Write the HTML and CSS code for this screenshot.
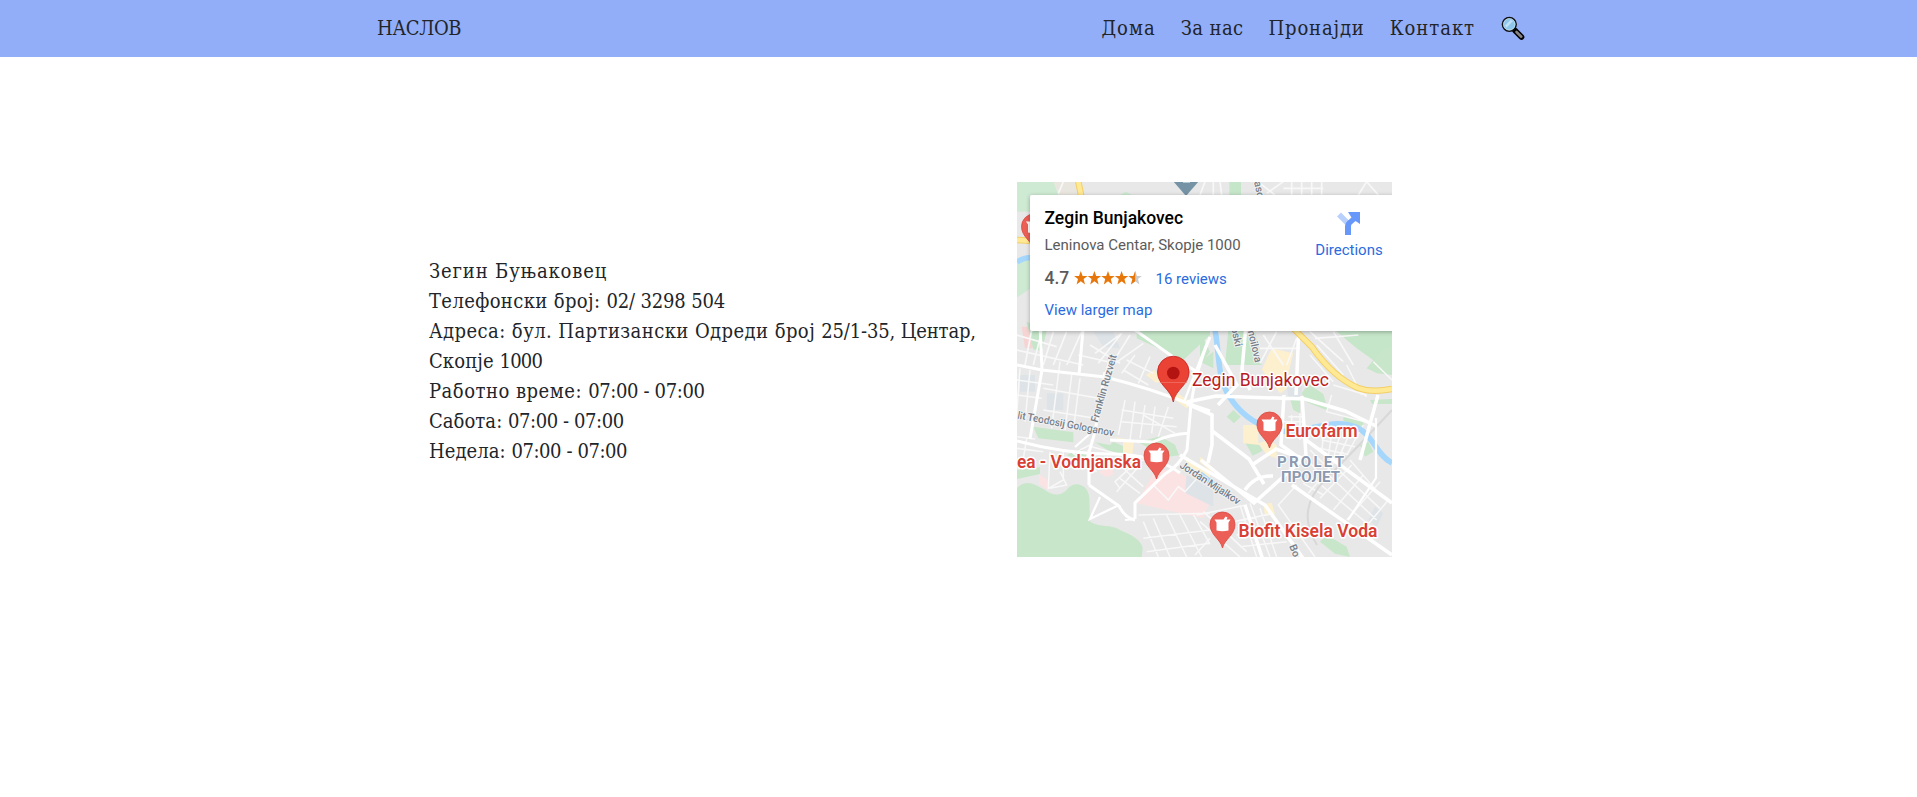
FILE: index.html
```html
<!DOCTYPE html>
<html lang="mk">
<head><meta charset="utf-8"><title>Наслов</title><link rel="stylesheet" href="styles.css"></head>
<body>
<header class="navbar">
  <div class="brand">НАСЛОВ</div>
  <nav class="links"><a class="home">Дома</a><a class="about">За нас</a><a class="find">Пронајди</a><a class="contact">Контакт</a>
    <svg class="search" viewBox="0 0 24 24"><path d="M14 14.500 20.500 21" stroke="#000" stroke-width="5.600" stroke-linecap="round"/><path d="M15.500 16 20.300 20.700" stroke="#858585" stroke-width="2.600" stroke-linecap="round"/><circle cx="8.300" cy="8.300" r="6.900" fill="#8ec7ee" stroke="#111" stroke-width="1.500"/><circle cx="8.300" cy="8.300" r="5.700" fill="none" stroke="#c4dceb" stroke-width=".8"/><path d="M4 9.500 9.500 4 12 5 5.500 11.800Z" fill="#c0e0f5"/></svg>
  </nav>
</header>
<main class="content">
  <section class="details">
    <p class="name">Зегин Буњаковец</p>
    <p class="phone">Телефонски број: <span>02/ 3298 504</span></p>
    <p class="street">Адреса: бул. Партизански Одреди број <span>25/1-35, Центар,</span></p>
    <p class="city">Скопје <span>1000</span></p>
    <p class="hours">Работно време: <span>07:00 - 07:00</span></p>
    <p class="weekend">Сабота: <span>07:00 - 07:00</span></p>
    <p class="weekend">Недела: <span>07:00 - 07:00</span></p>
  </section>
  <section class="map">
    <svg class="tiles" viewBox="1017 182 375 375">
      <defs>
        <g id="pin"><path d="M0 36C-2 27-12.500 23-12.500 12.500a12.500 12.500 0 0 1 25 0C12.500 23 2 27 0 36Z" fill="#eb5f57" stroke="#d9483f" stroke-width=".8"/><path d="M-8 7.500h9l2-3 2 1-1 2h4l-2 3v8q-6 1.500-12 0v-8Z" fill="#fff"/></g>
      </defs>
      <rect x="1017" y="182" width="375" height="375" fill="#e8e8e8"/>
      <!-- parks -->
      <g transform="translate(1010 175) scale(.33333)">
        <path d="M20 20H130L145 60H60V110H20ZM330 60l18-10 18 10ZM20 260l45-12v90l-45 30Z" fill="#ceead2"/>
        <path d="M130 20h62l12 40h-55Z" fill="#e9e6df"/><path d="M35 455H68v65H45Z" fill="#f7d4d4"/>
        <path d="M380 450H600V480L520 555 380 490ZM50 440l60 28-15 60-25-5Z" fill="#c5e6c9"/>
        <path d="M250 470h60l20 50-50-5Z" fill="#dde3e7"/>
      </g>
      <g transform="translate(1200 175) scale(.33333)">
        <path d="M88 20h35v40H88ZM85 465h80l20 105H75ZM405 465H576V570H540L470 520ZM0 470l30 60-30 40Z" fill="#c5e6c9"/>
        <path d="M215 520l65 15-20 80-75-30Z" fill="#fdf0ce"/>
      </g>
      <g transform="translate(1010 355) scale(.33333)">
        <path d="M20 400C50 370 75 390 100 402C125 422 150 425 170 405C190 375 235 385 238 430L240 500C275 520 300 505 330 525C365 540 395 555 398 580L395 606H20Z" fill="#c8e6c9"/>
        <path d="M70 215 190 232V262L85 250ZM170 300l40-18 28 22-20 15ZM255 262l45 8 10-10 35 15v18l-35 3ZM385 262l65-18 45 25 12 32-40 5ZM20 345l70-8v20l-70 15ZM570 20l40-30v50Z" fill="#c8e6c9"/>
        <path d="M310 245l62 12-5 40-28-5v-35ZM408 60l25-15 30 33-25 5ZM490 105l55 40-15 15-55-40ZM528 310l72 35v25l-72-32Z" fill="#fdf0ce"/>
        <path d="M430 355Q450 335 510 355L600 405V440L580 490 380 445ZM87 358l32 20-5 28-27-20ZM265 350l45-15v25l-25 5Z" fill="#fce3e3"/>
        <path d="M530 360l80 45v50l-85-42ZM30 60h45v50H30ZM110 115h50v50h-50Z" fill="#dde3e7"/>
      </g>
      <g transform="translate(1200 355) scale(.33333)">
        <path d="M305 115l20-28 45 30 15 50-65-25ZM80 185l20-20 22 20-20 20ZM500 40l50-60 26-5v85l-45-5ZM510 135l66-3v15h-60ZM480 270l25-10 15 30-25 15ZM135 262l35-5 18 30-30 15ZM360 560l20-20 60 35 10 31-45-10ZM430 182l60 20v15l-60-20ZM270 130l30 5v40l-20-10Z" fill="#c8e6c9"/>
        <path d="M130 210h45v55l30-10 25 15v40l-30-10-20-30-50-5ZM190 50 205 0 270 15 262 100 240 115ZM0 305l42 35-5 12-37-30ZM190 448l25-5 10 35-30 5Z" fill="#fdf0ce"/>
        <path d="M505 495l20-40 25 20-20 40ZM260 90h45v35h-40Z" fill="#dde3e7"/>
      </g>
      <!-- minor streets -->
      <g fill="none" stroke="#f8f8f8" stroke-width="1.500">
        <g transform="translate(1010 355) scale(.33333)" stroke-width="4.500">
          <path d="M20 75 130 90M20 120 95 130M30 40 20 180M60 45 45 200M150 20 125 220M185 60 165 225M210 70 190 225M20 245 75 252M100 100 265 130M100 165 255 190M20 280l80 10M50 250l-10 60M120 290l-5 110 45-25 0-90M120 400l50-10-20-40M240 270l-50 25 70 55M245 275l145 40 80 5M320 410l70-80M330 370l60 45M345 345l55 50M330 400l-15-20 60-55"/>
          <path d="M345 135 325 240M375 140 360 255M405 150 390 250M435 155 425 235M335 165l155 25M335 200l165 15M400 180l95 55M475 155l-30 90M340 45l75 45M350 15l80 40M375 0l-40 55M420 5l-35 80M385 480l215-5M400 500l45 106M430 490l50 116M470 480l60 126M510 480l65 126M550 478l50 90M400 550l200-25M410 590l190-25M430 390l45 45 30-40 20 15 45-50"/>
        </g>
        <g transform="translate(1200 355) scale(.33333)" stroke-width="4.500">
          <path d="M265 185h45M275 180v60M300 175v80M250 200h60M370 240l-5 55M395 235l-10 70M420 240l-20 70M445 245l-30 65M365 255l100 20M360 280l90 20M400 90l100 30M420 60l80 65M440 30l45 90M330 0l70 80M350-30l80 90M395 120l-15 50 115 30M520 20l56 55M490 210l-50 90M310 300l60 70M330 285l75 75"/>
          <path d="M310 385l60 35M370 345l160 150M345 375l180 150M410 340l130 120M450 315l95 110M325 415 430 290M360 430l95-100M400 465l90-105M440 495l100-115M490 525l75-90M0 500l120 106M10 470l130 120M120 450l50 156M150 445l60 161M180 460l50 146M100 500l120-25M110 540l125-20M120 575l140-15M-10 480l150-30M290 390l-55 60 110 156M30 550l-45 50M215 540h-70"/>
        </g>
        <g transform="translate(1010 175) scale(.33333)" stroke-width="5"><path d="M20 480l120 35M65 465l-20 105M95 468 70 570M130 470l-30 100M20 525l200 45M170 470l-40 100M215 470l-45 100M240 510l90 55M255 535l80-60M335 475l-70 90M205 540l110 25M360 480l-50 80M400 505l-85 60M145 55l15-35"/></g>
        <g transform="translate(1200 175) scale(.33333)" stroke-width="5"><path d="M0 60 15 20M40 60V20M65 60 60 20M200 55l50-35M180 25l45 35M275 20v40M305 20v40M335 20v40M250 40h120M365 20v40M475 60l25-40 35 40M190 480l60 90M230 470l-50 95M180 520h120M290 490l-30 80M330 470l100 90M400 470l60 100M345 490l130-10"/></g>
      </g>
      <!-- railway -->
      <path d="M1392 410Q1355 450 1325 480T1317 545" stroke="#d8d8d8" stroke-width="2" fill="none"/>
      <!-- river -->
      <path d="M1017 262q9-6 20-4M1214 325C1220 350 1216 375 1229 396C1240 414 1254 424 1274 430C1305 437 1326 416 1356 427C1373 434 1376 455 1392 463M1200 474l18 14" stroke="#a5d6fc" stroke-width="5.500" fill="none"/>
      <!-- main streets -->
      <g fill="none" stroke="#fff">
        <path d="M1017 365 1042 370 1105 377Q1150 388 1195 406L1210 411M1017 441Q1065 454 1110 454T1180 473M1110 440 1153 442Q1170 434 1190 433M1040 325l2 45-12 69M1105 372l-10 60-8 27M1089 450v35M1089 485l30 21Q1125 518 1135 520M1210 337Q1196 370 1191 404L1187 450Q1179 466 1165 474L1135 503 1135 519M1110 360l-5 18M1083 330l-4 45M1128 325l48 34 23 14" stroke-width="3"/>
        <path d="M1187 402 1216 396 1305 399 1345 411 1376 426M1187 404l25 11v30l-4 18M1215 345l22 40-19 20M1284 395l-3 50 21 15-48 43-53-43M1302 396l4 60M1306 440l86 63M1378 395l-18 65M1211 430l38 29 15 25M1180 455l85 50 50 70M1245 505l18 55M1299 325l-3 70M1252 465l24-16 26 9M1245 490q10-15 28-14M1292 485l100 70M1246 325l-4 45 8 20" stroke-width="3.500"/>
        <path d="M1092 432 1075 447M1184 402 1208 340M1376 418v60l-28 42M1119 505l-29 14 10-22M1135 519l-10 1" stroke-width="2.200"/>
      </g>
      <path d="M1077 175l5 25M1017 240q8 0 19 2M1290 325 1312 347Q1333 377 1358 388Q1372 393 1392 389" stroke="#f3cf66" stroke-width="6.500" fill="none"/>
      <path d="M1077 175l5 25M1017 240q8 0 19 2M1290 325 1312 347Q1333 377 1358 388Q1372 393 1392 389" stroke="#ffe994" stroke-width="4.500" fill="none"/>
      <g class="street-name">
        <text transform="translate(1097.500 423) rotate(-74)" textLength="70">Franklin Ruzvelt</text>
        <text transform="translate(1017 418.500) rotate(10.500)" textLength="98">lit Teodosij Gologanov</text>
        <text transform="translate(1179 467) rotate(33)" textLength="70">Jordan Mijalkov</text>
        <text transform="translate(1247 328) rotate(77)" textLength="36">moilova</text>
        <text transform="translate(1231 328) rotate(77)">oski</text>
        <text transform="translate(1254 182) rotate(78)">aso</text>
        <text transform="translate(1289 546) rotate(68)">Bo</text>
      </g>
      <path d="M1173 181h26l-13 15Z" fill="#7593a5"/><path d="M1183 182h7" stroke="#b8c8d1" stroke-width="2"/>
      <use href="#pin" x="1034" y="214"/>
      <use href="#pin" x="1156.500" y="443"/>
      <use href="#pin" x="1269.500" y="412"/>
      <use href="#pin" x="1222.500" y="512"/>
      <path d="M1173.300 402C1171 389 1157.500 385 1157.500 372a15.800 15.800 0 0 1 31.600 0C1189 385 1175.500 389 1173.300 402Z" fill="#ea4335" stroke="#c5221f" stroke-width=".8"/><circle cx="1173.300" cy="373" r="6.300" fill="#b31412"/><path d="M1160 382.500h27" stroke="#f0776c" stroke-width=".7"/>
      <g class="place">
        <text class="main-place" x="1192" y="385.500" textLength="137" lengthAdjust="spacingAndGlyphs">Zegin Bunjakovec</text>
        <text x="1285.500" y="437" textLength="72" lengthAdjust="spacingAndGlyphs">Eurofarm</text>
        <text x="1238.500" y="536.500" textLength="139" lengthAdjust="spacingAndGlyphs">Biofit Kisela Voda</text>
        <text x="1017" y="468" textLength="124" lengthAdjust="spacingAndGlyphs">ea - Vodnjanska</text>
      </g>
      <g class="district"><text x="1277" y="467" textLength="67">PROLET</text><text x="1281" y="482" textLength="59" lengthAdjust="spacingAndGlyphs">ПРОЛЕТ</text></g>
    </svg>
    <article class="card">
      <div class="place-info">
        <h2>Zegin Bunjakovec</h2>
        <div class="address">Leninova Centar, Skopje 1000</div>
        <div class="rating"><b>4.7</b>
          <svg class="stars" viewBox="0 0 68 14"><defs><path id="star" d="M6.800 0 8.600 4.900H13.500L9.600 8 11 13.400 6.800 10.300 2.600 13.400 4 8 .1 4.900H5Z"/></defs><g fill="#e7770b"><use href="#star"/><use href="#star" x="13.600"/><use href="#star" x="27.200"/><use href="#star" x="40.800"/></g><use href="#star" x="54.400" fill="#ccc"/><path d="M61.200 0V10.300L57 13.400 58.400 8 54.500 4.900H59.400Z" fill="#e7770b"/></svg>
          <a>16 reviews</a></div>
        <a class="larger">View larger map</a>
      </div>
      <div class="directions">
        <svg viewBox="0 0 23 23"><path d="M2 2.500 11 11.500" stroke="#b9d0fc" stroke-width="5.500"/><path d="M8 23V14Q8 11 10.500 9L14.500 5.500 11 0H23V12L18.500 9 14.500 12.500Q14 13 14 14.500V23Z" fill="#6797f9"/></svg>
        <a>Directions</a>
      </div>
    </article>
  </section>
</main>
</body></html>
```
FILE: styles.css
```css
body { margin: 0; background: #fff; font: 20px/30px "Roboto Slab", "DejaVu Serif Condensed", "DejaVu Serif", serif; color: #212529; }
.navbar { display: flex; justify-content: space-between; align-items: center; box-sizing: border-box; height: 57px; padding: 0 392px 2px 377px; background: #93aef8; }
.brand { letter-spacing: -.3px; }
.links { display: flex; align-items: center; gap: 25px; }
.home { letter-spacing: 1px; }
.about { letter-spacing: .4px; }
.find { letter-spacing: .85px; }
.contact { letter-spacing: .95px; }
.search { width: 24px; height: 24px; margin-left: 1px; }
.content { display: flex; align-items: flex-start; padding: 125px 0 0 429px; }
.details { width: 588px; padding-top: 74px; }
.details p { margin: 0; white-space: nowrap; }
.name { letter-spacing: .85px; }
.phone { letter-spacing: .37px; }
.phone span { letter-spacing: -.16px; }
.street { letter-spacing: .43px; }
.street span { letter-spacing: -.15px; }
.city { letter-spacing: .1px; }
.city span { letter-spacing: -.8px; }
.hours { letter-spacing: .5px; }
.hours span { letter-spacing: -.37px; }
.weekend { letter-spacing: .05px; }
.weekend span { letter-spacing: -.42px; }
.map { position: relative; width: 375px; height: 375px; overflow: hidden; font-family: Roboto, sans-serif; }
.tiles { display: block; width: 375px; height: 375px; }
.tiles text { paint-order: stroke; stroke-linejoin: round; stroke: #fff; }
.street-name text { font-size: 10.500px; font-weight: 500; fill: #76808b; stroke: #f2f2f2; stroke-width: 2px; }
.place text { font-size: 17.500px; font-weight: 600; fill: #d93f35; stroke-width: 3px; }
.place .main-place { font-size: 18px; font-weight: 400; fill: #b9201d; }
.district text { font-size: 15px; font-weight: 700; fill: #8c99af; stroke-width: 2px; }
.card { position: absolute; left: 13px; top: 13px; width: 380px; height: 136px; box-sizing: border-box; padding: 12px 0 0 14.500px; display: flex; background: #fff; border-radius: 2px; box-shadow: 0 1px 4px rgba(0,0,0,.3); font-size: 15px; line-height: 20px; }
.place-info { width: 270.500px; }
.card h2 { margin: 0 0 6px; font-size: 17.500px; line-height: 22px; font-weight: 500; color: #000; }
.address { color: #5b5b5b; }
.rating { display: flex; align-items: center; height: 22px; margin: 12px 0 11px; }
.rating b { width: 29px; font-size: 17.500px; font-weight: 500; color: #5b5b5b; }
.stars { width: 68px; height: 14px; margin-right: 14px; }
.card a { color: #2a6be0; }
.rating a { padding-top: 1px; }
.larger { display: block; }
.directions { display: flex; flex-direction: column; align-items: center; width: 68px; padding-top: 5px; }
.directions svg { width: 23px; height: 23px; margin: 0 2px 5px 0; }
```
